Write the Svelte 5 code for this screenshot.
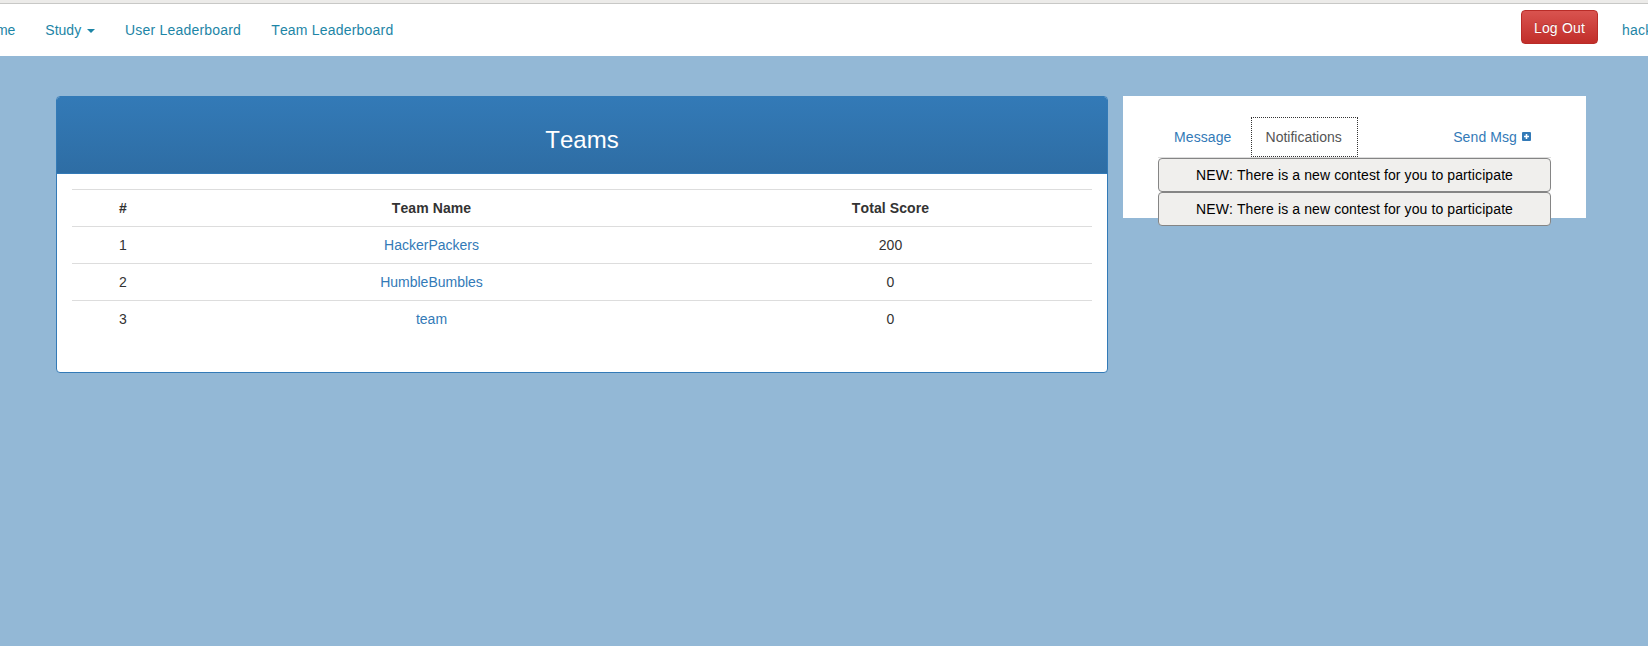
<script>
  const navItems = ['User Leaderboard', 'Team Leaderboard'];
  const teams = [
    { rank: 1, name: 'HackerPackers', score: 200 },
    { rank: 2, name: 'HumbleBumbles', score: 0 },
    { rank: 3, name: 'team', score: 0 }
  ];
  const notifications = [
    'NEW: There is a new contest for you to participate',
    'NEW: There is a new contest for you to participate'
  ];
</script>

<div class="page">
  <div class="strip"></div>
  <nav class="navbar">
    <ul class="nav-list">
      <li><a href="#home">Home</a></li>
      <li><a href="#study">Study <span class="caret"></span></a></li>
      {#each navItems as item}
        <li><a class="wide" href="#item">{item}</a></li>
      {/each}
    </ul>
    <div class="nav-right">
      <button class="logout">Log Out</button>
      <a class="user" href="#user">hacker</a>
    </div>
  </nav>

  <main class="content">
    <section class="panel">
      <header class="panel-heading"><h3>Teams</h3></header>
      <div class="panel-body">
        <table>
          <colgroup>
            <col class="c1" /><col class="c2" /><col class="c3" />
          </colgroup>
          <thead>
            <tr><th>#</th><th>Team Name</th><th>Total Score</th></tr>
          </thead>
          <tbody>
            {#each teams as t}
              <tr>
                <td>{t.rank}</td>
                <td><a href="#team">{t.name}</a></td>
                <td>{t.score}</td>
              </tr>
            {/each}
          </tbody>
        </table>
      </div>
    </section>

    <aside class="side">
      <ul class="tabs">
        <li><a href="#message">Message</a></li>
        <li class="active"><a href="#notifications">Notifications</a></li>
        <li class="send">
          <a href="#send">Send Msg
            <svg class="plus" viewBox="0 0 9 9" width="9" height="9" aria-hidden="true">
              <rect width="9" height="9" rx="1" fill="#337ab7" />
              <path d="M2 4.5h5M4.5 2v5" stroke="#fff" stroke-width="1.6" />
            </svg>
          </a>
        </li>
      </ul>
      <div class="notes">
        {#each notifications as n}
          <button class="note">{n}</button>
        {/each}
      </div>
    </aside>
  </main>
</div>

<style>
  :global(body) {
    margin: 0;
    background: #93b8d6;
  }
  .page {
    width: 1648px;
    height: 646px;
    overflow: hidden;
    background: #93b8d6;
    font-family: "Liberation Sans", Arial, sans-serif;
    font-size: 14px;
    line-height: 20px;
    color: #333;
    font-kerning: none;
  }
  a {
    text-decoration: none;
    color: #337ab7;
  }
  .strip {
    height: 3px;
    background: #ecebe9;
    border-bottom: 1px solid #c8c8c6;
  }
  .navbar {
    display: flex;
    justify-content: space-between;
    height: 52px;
    background: #fff;
  }
  .nav-list {
    display: flex;
    list-style: none;
    margin: 0 0 0 -37px;
    padding: 0;
  }
  .nav-list a {
    display: block;
    padding: 16px 15px 14px;
    color: #1d85a6;
  }
  .nav-list a.wide {
    letter-spacing: 0.2px;
  }
  .caret {
    display: inline-block;
    width: 0;
    height: 0;
    margin-left: 2px;
    vertical-align: middle;
    border-top: 4px solid;
    border-left: 4px solid transparent;
    border-right: 4px solid transparent;
  }
  .nav-right {
    display: flex;
    gap: 24px;
    width: 127px;
    white-space: nowrap;
  }
  .logout {
    flex: none;
    width: 77px;
    height: 34px;
    margin-top: 6px;
    padding: 1px 0 0;
    border: 1px solid #b92c28;
    border-radius: 4px;
    background: linear-gradient(#d9534f, #c12e2a);
    color: #fff;
    font: inherit;
    letter-spacing: 0.2px;
    text-shadow: 0 -1px 0 rgba(0, 0, 0, 0.2);
  }
  .user {
    padding-top: 16px;
    color: #1d85a6;
    letter-spacing: 0.2px;
  }
  .content {
    display: flex;
    align-items: flex-start;
    gap: 15px;
    padding: 40px 0 0 56px;
  }
  .panel {
    width: 1052px;
    box-sizing: border-box;
    background: #fff;
    border: 1px solid #337ab7;
    border-radius: 4px;
    overflow: hidden;
  }
  .panel-heading {
    padding: 10px 15px;
    background: linear-gradient(#337ab7, #2e6da4);
    border-bottom: 1px solid #337ab7;
    text-align: center;
    color: #fff;
  }
  h3 {
    margin: 20px 0 10px;
    font-size: 24px;
    font-weight: 500;
    line-height: 26px;
  }
  .panel-body {
    padding: 15px;
  }
  table {
    width: 1020px;
    table-layout: fixed;
    border-collapse: collapse;
    margin-bottom: 20px;
    text-align: center;
  }
  .c1 { width: 102px; }
  .c2 { width: 515px; }
  .c3 { width: 403px; }
  th, td {
    padding: 8px;
    border-top: 1px solid #ddd;
    text-align: center;
  }
  thead th {
    font-weight: 700;
    letter-spacing: 0.1px;
  }
  .side {
    position: relative;
    width: 463px;
    height: 122px;
    box-sizing: border-box;
    padding: 21px 35px 0;
    background: #fff;
  }
  .tabs {
    display: flex;
    list-style: none;
    margin: 0;
    padding: 0;
    border-bottom: 1px solid #ddd;
  }
  .tabs li {
    margin-right: 2px;
  }
  .tabs a {
    display: block;
    padding: 9px 15px;
    border: 1px solid transparent;
    line-height: 20px;
    letter-spacing: 0.1px;
  }
  .tabs .active {
    margin-left: 1px;
  }
  .tabs .active a {
    padding: 9px 15px 9px 14px;
    border: 1px dotted #333;
    color: #555;
    letter-spacing: 0;
  }
  .tabs .send {
    margin-left: auto;
    margin-right: 4px;
  }
  .plus {
    margin-left: 1px;
    vertical-align: 1px;
  }
  .notes {
    display: flex;
    flex-direction: column;
  }
  .note {
    width: 393px;
    height: 34px;
    padding: 0;
    border: 1px solid #858585;
    border-radius: 4px;
    background: #f0efed;
    color: #000;
    font: inherit;
    letter-spacing: 0.1px;
  }
</style>
